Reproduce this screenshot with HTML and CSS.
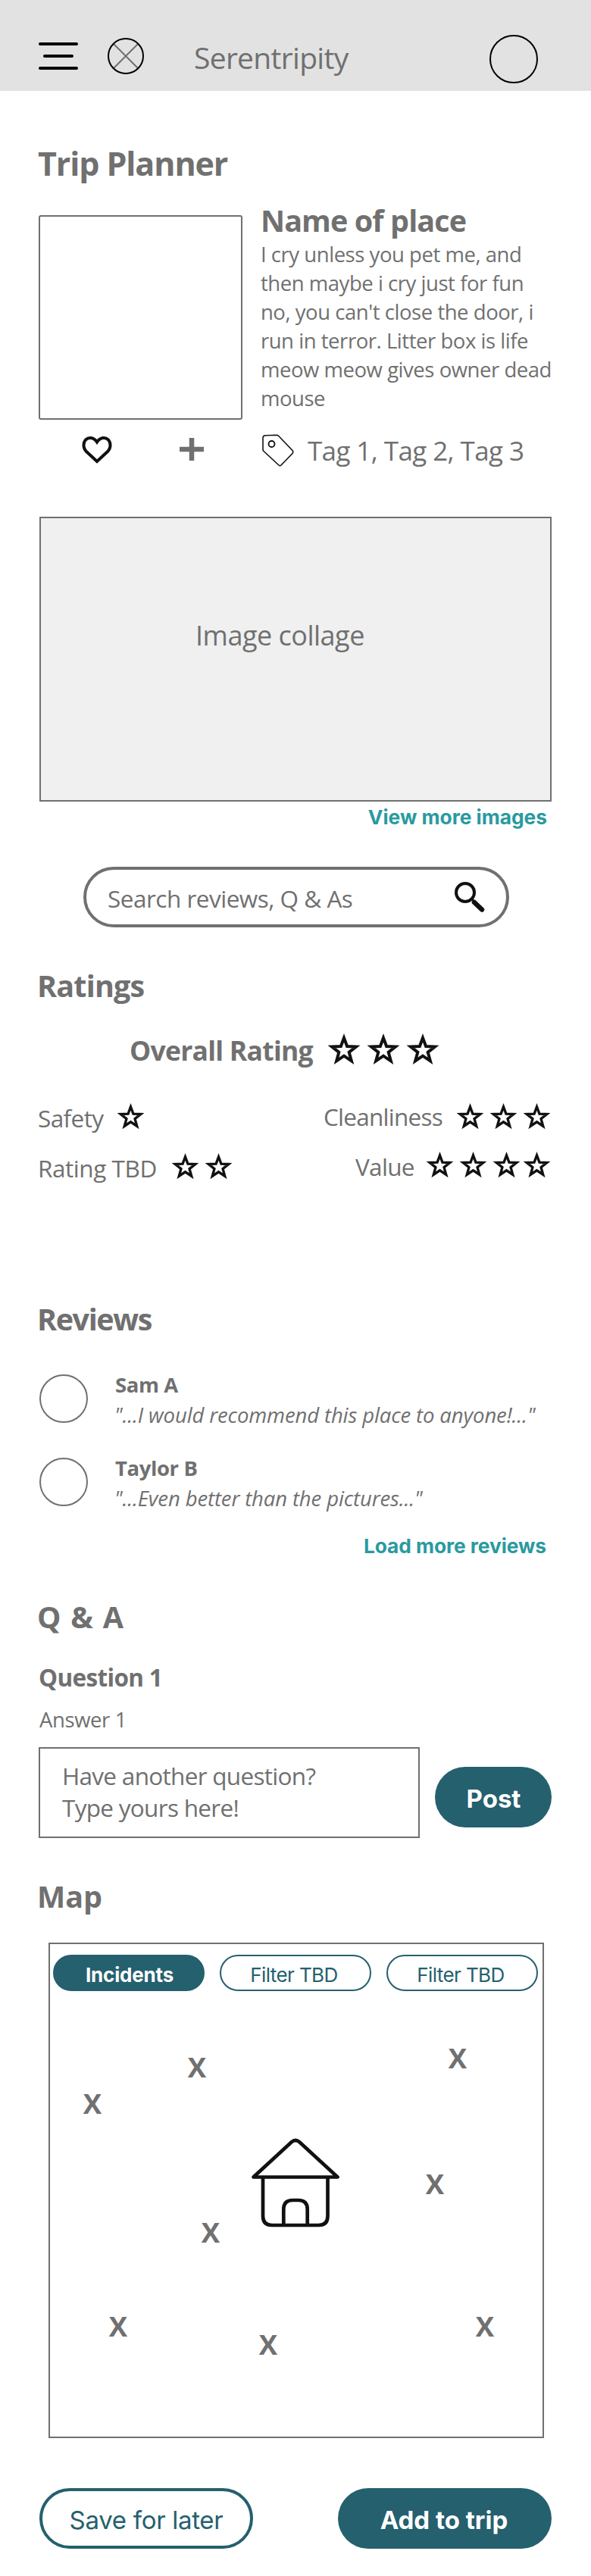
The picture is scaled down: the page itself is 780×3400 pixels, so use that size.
FILE: index.html
```html
<!DOCTYPE html>
<html lang="en">
<head>
<meta charset="utf-8">
<title>Serentripity</title>
<link rel="stylesheet" href="styles.css">
</head>
<body>
<svg class="defs" width="0" height="0">
  <symbol id="star" viewBox="0 0 42 42" overflow="visible">
    <path d="M21 5.900L25.110 17.040 36.980 17.510 27.660 24.860 30.870 36.290 21 29.700 11.130 36.290 14.340 24.860 5.020 17.510 16.890 17.040z" fill="none" stroke="#111" stroke-width="4"/>
  </symbol>
</svg>

<header class="topbar">
  <svg class="menu" width="52" height="36" viewBox="0 0 52 36"><path d="M2 2h48M8 18h36M2 34h48" stroke="#000" stroke-width="4" stroke-linecap="round"/></svg>
  <svg class="logo" width="48" height="48" viewBox="0 0 48 48"><path d="M8 8l32 32M40 8L8 40" stroke="#707070" stroke-width="2"/><circle cx="24" cy="24" r="23" fill="none" stroke="#000" stroke-width="2"/></svg>
  <span class="brand">Serentripity</span>
  <span class="profile"></span>
</header>

<main class="page">
  <h1 class="title">Trip Planner</h1>

  <section class="place">
    <div class="place-left">
      <div class="photo"></div>
      <div class="actions">
        <svg width="40" height="38" viewBox="0 0 40 38"><path d="M20 35L5.500 21.500C1.500 17 1.500 10.500 5 6.500 9 2.500 15.500 3 20 9.500 24.500 3 31 2.500 35 6.500c3.500 4 3.500 10.500-.5 15z" fill="none" stroke="#111" stroke-width="4"/></svg>
        <svg width="32" height="30" viewBox="0 0 32 30"><path d="M16 0v30M0 15h32" stroke="#707070" stroke-width="6.500"/></svg>
      </div>
    </div>
    <div class="place-right">
      <h2 class="place-name">Name of place</h2>
      <p class="place-text">I cry unless you pet me, and<br>then maybe i cry just for fun<br>no, you can't close the door, i<br>run in terror. Litter box is life<br>meow meow gives owner dead<br>mouse</p>
      <div class="tags">
        <svg width="42" height="43" viewBox="0 0 42 43"><path d="M4.500 1.800L19 1.200q1.500 0 2.500 1L40 21.500q1.500 2 0 4L25 41q-1.500 1.500-3 0L2 22.500q-1-1-1-2.500V5q0-3 3.500-3.200z" fill="none" stroke="#111" stroke-width="1.600"/><circle cx="12.500" cy="13" r="4" fill="none" stroke="#111" stroke-width="1.800"/></svg>
        <span class="tag-text">Tag 1, Tag 2, Tag 3</span>
      </div>
    </div>
  </section>

  <section class="collage"><span class="collage-text">Image collage</span></section>
  <a class="link link-images">View more images</a>

  <div class="search">
    <span class="search-text">Search reviews, Q &amp; As</span>
    <svg width="42" height="42" viewBox="0 0 42 42"><circle cx="15" cy="15" r="12" fill="none" stroke="#111" stroke-width="4"/><path d="M24 24l3 3" stroke="#111" stroke-width="3"/><path d="M27 28l10 9.500" stroke="#111" stroke-width="6.500" stroke-linecap="round"/></svg>
  </div>

  <h2 class="heading heading-ratings">Ratings</h2>
  <div class="overall">
    <span class="overall-text">Overall Rating</span>
    <span class="stars stars-large"><svg><use href="#star"/></svg><svg><use href="#star"/></svg><svg><use href="#star"/></svg></span>
  </div>
  <div class="rates">
    <div class="rate"><span class="rate-label safety">Safety</span><span class="stars"><svg><use href="#star"/></svg></span></div>
    <div class="rate right"><span class="rate-label clean">Cleanliness</span><span class="stars stars-three"><svg><use href="#star"/></svg><svg><use href="#star"/></svg><svg><use href="#star"/></svg></span></div>
    <div class="rate"><span class="rate-label tbd">Rating TBD</span><span class="stars"><svg><use href="#star"/></svg><svg><use href="#star"/></svg></span></div>
    <div class="rate right"><span class="rate-label value">Value</span><span class="stars stars-four"><svg><use href="#star"/></svg><svg><use href="#star"/></svg><svg><use href="#star"/></svg><svg><use href="#star"/></svg></span></div>
  </div>

  <h2 class="heading heading-reviews">Reviews</h2>
  <div class="review">
    <span class="avatar"></span>
    <div><div class="reviewer">Sam A</div><div class="quote">"...I would recommend this place to anyone!..."</div></div>
  </div>
  <div class="review">
    <span class="avatar"></span>
    <div><div class="reviewer">Taylor B</div><div class="quote">"...Even better than the pictures..."</div></div>
  </div>
  <a class="link link-reviews">Load more reviews</a>

  <h2 class="heading heading-qa">Q &amp; A</h2>
  <h3 class="question">Question 1</h3>
  <p class="answer">Answer 1</p>
  <div class="ask">
    <div class="ask-box">Have another question?<br>Type yours here!</div>
    <div class="btn post">Post</div>
  </div>

  <h2 class="heading heading-map">Map</h2>
  <section class="map">
    <div class="filters">
      <span class="pill active">Incidents</span>
      <span class="pill">Filter TBD</span>
      <span class="pill">Filter TBD</span>
    </div>
    <span class="pin p1">X</span><span class="pin p2">X</span><span class="pin p3">X</span><span class="pin p4">X</span>
    <span class="pin p5">X</span><span class="pin p6">X</span><span class="pin p7">X</span><span class="pin p8">X</span>
    <svg class="house" width="118" height="119" viewBox="0 0 118 119"><path d="M53 5q5-4 10 0L113.500 51.500H2.500zM15 52v51q0 12 12 12h61.500q12 0 12-12V52M42.300 115V94q0-12 12-12h7.400q12 0 12 12v21" fill="none" stroke="#111" stroke-width="4.700" stroke-linejoin="round"/></svg>
  </section>

  <div class="bottom">
    <div class="btn save">Save for later</div>
    <div class="btn add">Add to trip</div>
  </div>
</main>
</body>
</html>
```
FILE: styles.css
```css
* { box-sizing: border-box; }
body { margin: 0; background: #fff; color: #707070; font-family: "Open Sans", "Noto Sans", sans-serif; width: 780px; height: 3400px; overflow: hidden; white-space: nowrap; }
h1, h2, h3, p { margin: 0; }
svg { display: block; flex: none; }
.defs { position: absolute; }

.topbar { height: 120px; background: #e2e2e2; display: flex; align-items: flex-start; padding-left: 51px; }
.menu { margin-top: 56px; }
.logo { margin: 50px 0 0 39px; }
.brand { margin: 50px 0 0 66px; width: 390px; font-size: 39px; line-height: 52px; letter-spacing: -0.7px; }
.profile { margin-top: 46px; width: 64px; height: 64px; border: 2px solid #000; border-radius: 50%; }

.page { padding: 66px 52px 0; }
.title { font-size: 43px; line-height: 60px; letter-spacing: -1.1px; margin-left: -2px; }

.place { display: flex; margin-top: 19px; height: 353px; margin-left: -1px; }
.place-left { width: 269px; padding-top: 19px; }
.photo { height: 270px; border: 2px solid #707070; border-radius: 3px; }
.actions { display: flex; align-items: center; padding: 20px 0 0 57px; gap: 89px; }
.place-right { padding-left: 24px; }
.place-name { font-size: 39.5px; line-height: 52px; letter-spacing: -0.9px; }
.place-text { font-size: 27.5px; line-height: 38px; letter-spacing: -0.46px; }
.tags { display: flex; gap: 18px; padding: 28px 0 0 2px; }
.tag-text { font-size: 35px; line-height: 43px; letter-spacing: -0.6px; }

.collage { margin-top: 64px; width: 676px; height: 376px; background: #f0f0f0; border: 2px solid #707070; padding: 130px 0 0 204px; }
.collage-text { display: block; font-size: 36px; line-height: 50px; letter-spacing: -0.5px; }
.link { display: block; text-align: right; font-family: Inter, sans-serif; font-weight: 700; font-size: 26.3px; line-height: 34px; color: #2a9a9f; }
.link-images { margin-top: 4px; padding-right: 6px; }
.link-reviews { margin-top: 36px; padding-right: 7px; letter-spacing: -0.05px; }

.search { margin: 48px 0 0 58px; width: 562px; height: 80px; border: 4px solid #707070; border-radius: 40px; display: flex; justify-content: space-between; align-items: center; padding: 0 27px 0 28px; }
.search-text { font-size: 31.5px; line-height: 44px; letter-spacing: -0.5px; padding-top: 3px; }

.heading { font-size: 39.5px; line-height: 54px; letter-spacing: -0.8px; margin-left: -3px; }
.heading-ratings { margin-top: 50px; }
.overall { display: flex; margin: 34px 0 0 119px; }
.overall-text { width: 262px; font-weight: 700; font-size: 35.5px; line-height: 48px; letter-spacing: -0.75px; }
.stars { display: flex; gap: 9px; padding-top: 2px; }
.stars svg { width: 35px; height: 35px; overflow: visible; }
.stars-large { gap: 10px; }
.stars-large svg { width: 42px; height: 42px; }
.rates { display: grid; grid-template-columns: 1fr 1fr; margin-top: 44px; row-gap: 22px; }
.rate { display: flex; height: 44px; font-size: 31.5px; line-height: 44px; margin-left: -2px; }
.right { justify-content: flex-end; margin: -2px 2px 0 0; }
.rate-label { letter-spacing: -0.6px; }
.safety { width: 105px; }
.clean { width: 176px; letter-spacing: -0.75px; }
.tbd { width: 177px; letter-spacing: -0.45px; }
.value { width: 94px; letter-spacing: -0.7px; }
.stars-three { padding-top: 4px; }
.stars-four svg:last-child { margin-left: -4px; }

.heading-reviews { margin-top: 150px; letter-spacing: -1.4px; }
.review { display: flex; gap: 36px; height: 64px; margin-top: 46px; }
.avatar { width: 64px; height: 64px; border: 2px solid #707070; border-radius: 50%; flex: none; }
.reviewer { font-weight: 700; font-size: 27.5px; line-height: 40px; letter-spacing: -0.4px; margin-top: -6px; }
.quote { font-style: italic; font-size: 27.5px; line-height: 40px; letter-spacing: -0.13px; margin-left: -1px; }

.heading-qa { margin-top: 49px; letter-spacing: 1.3px; }
.question { font-size: 31.5px; line-height: 44px; letter-spacing: -0.65px; margin: 31px 0 0 -1px; }
.answer { font-size: 27.5px; line-height: 38px; letter-spacing: -0.4px; margin: 15px 0 0 0; }
.ask { display: flex; align-items: center; justify-content: space-between; margin-left: -1px; height: 120px; margin-top: 17px; }
.ask-box { width: 503px; height: 120px; border: 2px solid #707070; padding: 15px 0 0 29px; font-size: 31.5px; line-height: 42px; letter-spacing: -0.7px; }
.btn { height: 80px; border-radius: 40px; font-family: Inter, sans-serif; font-size: 33px; line-height: 84px; text-align: center; }
.post, .add { background: #25606e; color: #fff; font-weight: 700; }
.post { width: 154px; margin-top: 12px; padding-left: 1px; }

.heading-map { margin-top: 50px; letter-spacing: 0; }
.map { position: relative; margin: 34px 0 0 12px; width: 654px; height: 654px; border: 2px solid #707070; }
.filters { display: flex; gap: 20px; padding: 14px 0 0 4px; }
.pill { width: 200px; height: 48px; border: 2px solid #25606e; border-radius: 24px; padding-right: 4px; text-align: center; font-family: Inter, sans-serif; font-size: 26px; line-height: 50px; letter-spacing: -0.6px; color: #25606e; }
.active { background: #25606e; color: #fff; font-weight: 700; letter-spacing: -0.2px; padding: 0 0 0 2px; }
.pin { position: absolute; width: 30px; text-align: center; font-weight: 700; font-size: 36.5px; line-height: 50px; }
.p1 { left: 179px; top: 137px; }
.p2 { left: 523px; top: 125px; }
.p3 { left: 41px; top: 185px; }
.p4 { left: 493px; top: 291px; }
.p5 { left: 197px; top: 355px; }
.p6 { left: 75px; top: 479px; }
.p7 { left: 273px; top: 503px; }
.p8 { left: 559px; top: 479px; }
.house { position: absolute; left: 266px; top: 256px; }

.bottom { display: flex; justify-content: space-between; margin-top: 66px; }
.save { width: 282px; border: 4px solid #25606e; color: #25606e; line-height: 76px; letter-spacing: -0.3px; }
.add { width: 282px; padding-right: 2px; }
```
